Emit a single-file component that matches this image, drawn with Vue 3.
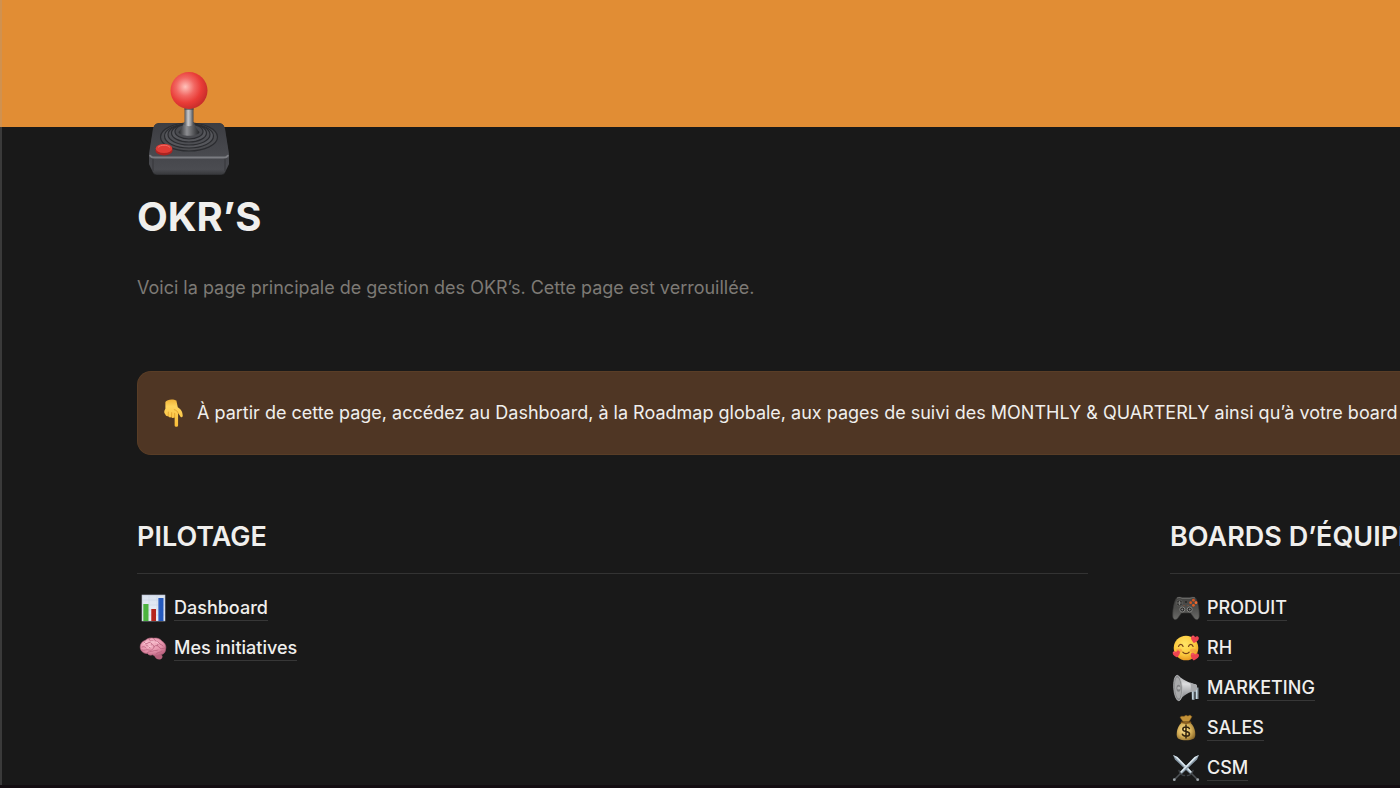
<script setup>
const columns = [
  {
    title: 'PILOTAGE',
    links: [
      { icon: 'chart', label: 'Dashboard' },
      { icon: 'brain', label: 'Mes initiatives' },
    ],
  },
  {
    title: 'BOARDS D’ÉQUIPE',
    links: [
      { icon: 'gamepad', label: 'PRODUIT' },
      { icon: 'face', label: 'RH' },
      { icon: 'megaphone', label: 'MARKETING' },
      { icon: 'moneybag', label: 'SALES' },
      { icon: 'swords', label: 'CSM' },
    ],
  },
]
</script>

<template>
  <div class="page">
    <svg class="sprite" aria-hidden="true">
      <defs>
        <radialGradient id="ball" cx=".4" cy=".4" r=".62">
          <stop offset="0" stop-color="#ffc2bb" />
          <stop offset=".4" stop-color="#f26762" />
          <stop offset=".7" stop-color="#e93c37" />
          <stop offset="1" stop-color="#c92d2a" />
        </radialGradient>
        <linearGradient id="stick" x1="0" x2="1" y1="0" y2="0">
          <stop offset="0" stop-color="#55565a" />
          <stop offset=".4" stop-color="#c8c9cb" />
          <stop offset=".65" stop-color="#a0a1a4" />
          <stop offset="1" stop-color="#48494d" />
        </linearGradient>
        <linearGradient id="boot" x1="0" x2="1" y1="0" y2="0">
          <stop offset="0" stop-color="#252629" />
          <stop offset=".4" stop-color="#8d8e92" />
          <stop offset="1" stop-color="#242528" />
        </linearGradient>
        <linearGradient id="baseTop" x1="0" x2="0" y1="0" y2="1">
          <stop offset="0" stop-color="#3c3d42" />
          <stop offset="1" stop-color="#4a4b50" />
        </linearGradient>
        <linearGradient id="baseFront" x1="0" x2="0" y1="0" y2="1">
          <stop offset="0" stop-color="#696a6f" />
          <stop offset=".2" stop-color="#46474c" />
          <stop offset=".75" stop-color="#4b4c51" />
          <stop offset="1" stop-color="#37383b" />
        </linearGradient>
        <linearGradient id="hand" x1="0" x2="0" y1="0" y2="1">
          <stop offset="0" stop-color="#efb136" />
          <stop offset=".25" stop-color="#ffd45c" />
          <stop offset="1" stop-color="#f9bd38" />
        </linearGradient>
        <linearGradient id="paper" x1="0" x2="0" y1="0" y2="1">
          <stop offset="0" stop-color="#d9e2ef" />
          <stop offset="1" stop-color="#f3f5f9" />
        </linearGradient>
        <radialGradient id="pink" cx=".4" cy=".3" r=".75">
          <stop offset="0" stop-color="#f8bccb" />
          <stop offset=".6" stop-color="#e694ac" />
          <stop offset="1" stop-color="#b95f7d" />
        </radialGradient>
        <linearGradient id="pad" x1="0" x2="0" y1="0" y2="1">
          <stop offset="0" stop-color="#434342" />
          <stop offset=".5" stop-color="#4e4e4c" />
          <stop offset="1" stop-color="#6b6b68" />
        </linearGradient>
        <radialGradient id="skin" cx=".45" cy=".35" r=".65">
          <stop offset="0" stop-color="#ffe566" />
          <stop offset=".65" stop-color="#fcca3e" />
          <stop offset="1" stop-color="#e99a22" />
        </radialGradient>
        <linearGradient id="horn" x1="0" x2="0" y1="0" y2="1">
          <stop offset="0" stop-color="#a4a5a7" />
          <stop offset=".35" stop-color="#dcdddf" />
          <stop offset="1" stop-color="#77787b" />
        </linearGradient>
        <radialGradient id="gold" cx=".42" cy=".45" r=".65">
          <stop offset="0" stop-color="#ffe596" />
          <stop offset=".55" stop-color="#d6b058" />
          <stop offset="1" stop-color="#8b6829" />
        </radialGradient>
      </defs>

      <symbol id="icon-chart" viewBox="0 0 28 28">
        <rect x="3" y="1" width="23" height="26" fill="url(#paper)" stroke="#b8c0cf" stroke-width=".6" />
        <path d="M3 6h23M3 11h23M3 16h23M3 21h23M10 1v26M18 1v26" stroke="#c7d1e2" stroke-width=".5" />
        <rect x="4" y="10" width="5.5" height="17" fill="#4cb340" />
        <rect x="12" y="15" width="5" height="12" fill="#b5261d" />
        <rect x="19.2" y="4" width="5.3" height="23" fill="#2459bd" />
        <path d="M4.500 10v17M12.500 15v12M19.700 4v23" stroke="#fff" stroke-opacity=".25" />
      </symbol>

      <symbol id="icon-brain" viewBox="0 0 28 28">
        <path d="M15 21c1 3 3 4.500 5.500 4.500 2 0 3-1.500 3-3.500l-3-3z" fill="#b8627d" />
        <path d="M1.500 15C.5 11 2.500 7.500 6 6.500 8.500 4 12 3.500 14.500 4.200c4-.7 7 .8 8.500 3 3 1.500 4.500 5 3.600 8-.1 3.500-2.600 5.600-5.600 5.400-2.500 1.800-5.500 1.500-7.500.2-2 .8-4 .2-5-1.300-3 .3-6-1.500-7-4.500z" fill="url(#pink)" stroke="#b86781" stroke-width=".6" />
        <path d="M3 13c2-1 3 0 4 1M5 8c1 2 3 2 4 1s3-1 4 1M10 5c0 2 2 2 4 2M15 5c1 3 4 2 5 4s3 1 4 3M3 16c3 1 4-1 7 0s4-1 5-3 4-2 5 0 3 2 6 1M8 19c1-2 4-1 6-2s4 0 5-1M12 11c2-1 3 0 3 2M18 12c0-2 2-3 3-2M17 20c1-2 4-1 6-3M7 11c1 1 3 1 4 3" fill="none" stroke="#b35b78" stroke-width=".7" stroke-linecap="round" />
        <path d="M5 10c1-2 2-1 3-2M12 8c1-1 2 0 3 0M17 8c2 0 2 1 3 2M9 13c2 0 2-1 3-1" fill="none" stroke="#ffd6df" stroke-width=".8" stroke-linecap="round" />
      </symbol>

      <symbol id="icon-gamepad" viewBox="0 0 28 28">
        <path d="M4 4.500C6 2.500 9 3 10 3.500h8c1-.5 4-1 6 1 2 4 3.500 11 3.300 17.500-.2 4-3 4.500-4.800 2.500l-4-5.500h-9l-4 5.500C3.700 26.500.9 26 .7 22 .5 15.500 2 8.500 4 4.500z" fill="url(#pad)" stroke="#353534" stroke-width=".6" />
        <path d="M5 4c3-1 4 0 5 .3h8c2-.4 3-1.200 5-.3" fill="none" stroke="#858582" stroke-width=".7" />
        <circle cx="7.500" cy="9" r="3.200" fill="#30302f" stroke="#6b6b68" stroke-width=".6" />
        <path d="M7.500 6.800v4.400M5.300 9h4.400" stroke="#7b7b78" stroke-width="1.200" />
        <circle cx="18.700" cy="8.700" r="1.400" fill="#d6551f" />
        <circle cx="21.400" cy="6.200" r="1.400" fill="#d6551f" />
        <circle cx="24" cy="8.700" r="1.400" fill="#f4692c" />
        <circle cx="21.400" cy="11.300" r="1.400" fill="#e35b20" />
        <circle cx="14" cy="8" r="1" fill="#242423" />
        <circle cx="12" cy="11.500" r=".5" fill="#a7562d" />
        <circle cx="16" cy="11.500" r=".5" fill="#a7562d" />
        <circle cx="10.300" cy="15.500" r="2.500" fill="#242424" stroke="#868683" />
        <circle cx="10.300" cy="15.500" r="1" fill="#858583" />
        <circle cx="17.700" cy="15.500" r="2.500" fill="#242424" stroke="#868683" />
        <circle cx="17.700" cy="15.500" r="1" fill="#858583" />
      </symbol>

      <symbol id="heart" viewBox="0 0 10 10">
        <path d="M5 9.500C1 6.500 0 4.500.5 2.600 1.200.6 4 .5 5 2.800 6 .5 8.800.6 9.500 2.600 10 4.500 9 6.500 5 9.500z" fill="#ed4350" />
        <path d="M1.700 3.300c.2-1 1-1.200 1.600-.8" fill="none" stroke="#ff8990" stroke-width=".7" />
      </symbol>

      <symbol id="icon-face" viewBox="0 0 28 28">
        <circle cx="14" cy="14" r="12.300" fill="url(#skin)" />
        <ellipse cx="7" cy="16.500" rx="3" ry="2" fill="#f58a42" opacity=".5" />
        <ellipse cx="21" cy="16.500" rx="3" ry="2" fill="#f58a42" opacity=".5" />
        <path d="M6.500 12.500c.8-2.800 3.800-2.800 4.600 0M16.500 12.500c.8-2.800 3.800-2.800 4.600 0M10.800 18.200c1.500 2 4.900 2 6.400 0" fill="none" stroke="#79431a" stroke-width="1.200" stroke-linecap="round" />
        <use href="#heart" x="18.500" y="1" width="8.500" height="8.500" transform="rotate(12 23 5)" />
        <use href="#heart" x=".5" y="16" width="8" height="8" transform="rotate(-10 4 20)" />
        <use href="#heart" x="18" y="18" width="9" height="9" transform="rotate(12 22 23)" />
      </symbol>

      <symbol id="icon-megaphone" viewBox="0 0 28 28">
        <path d="M19.500 14l7-.5v11.500h-3v-7h-1v8h-2.600z" fill="#8d99a2" />
        <path d="M24.500 14v11M20.700 17v8" stroke="#c7d9e3" stroke-width="1.200" />
        <path d="M5.500 1.200C10 5 17 9 24 10.500c1.500 1 1.500 5 0 6C17 18 12 21 7.500 26.500z" fill="url(#horn)" />
        <path d="M18 8.500c1.200 2.500 1.200 6.500 0 9.500l6-1.500c1.500-1 1.500-5 0-6z" fill="#a8a9ac" />
        <ellipse cx="6" cy="14" rx="4.300" ry="12.800" transform="rotate(-4 6 14)" fill="#8a8b8d" stroke="#c1c2c3" stroke-width=".7" />
        <ellipse cx="6" cy="14" rx="3" ry="10.500" transform="rotate(-4 6 14)" fill="#a9aaab" />
        <ellipse cx="6.500" cy="14.300" rx="2" ry="3.500" fill="#808183" />
        <circle cx="6.800" cy="14" r="1.600" fill="#b5b6b7" />
      </symbol>

      <symbol id="icon-moneybag" viewBox="0 0 28 28">
        <path d="M8 3.200c2-2.200 3.500 0 5-1.500 1.500-1.300 2 .8 3.500 0 1.500-1 2.500-.3 3.500 1l-3 5h-6z" fill="#c39238" stroke="#765119" stroke-width=".5" />
        <path d="M10.500 8h7c4 3 6 8 5.800 13-.2 4-3 5.200-9.300 5.200s-9.100-1.200-9.300-5.200C4.500 16 6.500 11 10.500 8z" fill="url(#gold)" />
        <path d="M9.500 8.300c3 1 6 1 9 0" stroke="#83571b" stroke-width="1.700" fill="none" stroke-linecap="round" />
        <path d="M17.400 14.500c-.7-1.800-6.600-2.200-6.600.7 0 3.200 6.700 1.600 6.700 4.800 0 2.800-6.200 2.900-7.100.3M14 11V24" stroke="#33240f" stroke-width="1.500" fill="none" stroke-linecap="round" />
      </symbol>

      <symbol id="blade" viewBox="0 0 28 28">
        <path d="M1 1l4.500 2L20.500 18.500l-2 1.700L3 5.500z" fill="#8798a6" />
        <path d="M1 1l18.500 18.500 1-1L5.500 3z" fill="#dce7ee" />
        <path d="M15.500 21.500c2 .5 5-2 5.500-5" stroke="#3d4145" stroke-width="1.500" fill="none" stroke-linecap="round" />
        <path d="M19.500 19.500l5.500 5.500" stroke="#4c5054" stroke-width="1.600" />
        <circle cx="25.700" cy="25.700" r="1.400" fill="#9da5aa" />
      </symbol>

      <symbol id="icon-swords" viewBox="0 0 28 28">
        <use href="#blade" width="28" height="28" />
        <use href="#blade" width="28" height="28" transform="translate(28 0) scale(-1 1)" />
      </symbol>
    </svg>

    <header class="cover"></header>

    <main class="content">
      <svg class="joystick" viewBox="0 0 82 106" role="img" aria-label="Joystick">
        <path d="M12 52h58c4 0 6 2 7 6l4 26v9l-4 9c-1 2-3 2-6 2H11c-3 0-5 0-6-2l-4-9v-9l4-26c1-4 3-6 7-6z" fill="#2a2b2e" />
        <path d="M12 52h58c4 0 6 2 7 6l4 25c0 3-2 5-5 5H6c-3 0-5-2-5-5l4-25c1-4 3-6 7-6z" fill="url(#baseTop)" />
        <path d="M1 83c0 2 2 3 5 3h70c3 0 5-1 5-3v10l-4 8c-1 2-3 2.500-6 2.500H11c-3 0-5-.5-6-2.500l-4-8z" fill="url(#baseFront)" />
        <path d="M2 84c1 2.500 2 2.500 5 2.500h68c3 0 4 0 5-2.500" fill="none" stroke="#7b7c81" stroke-width="2" />
        <path d="M5 88v12M77 88v12" stroke="#36373b" />
        <g stroke="#2b2c30" stroke-width="1.200">
          <ellipse cx="41" cy="66" rx="28.500" ry="14" fill="#4b4c50" />
          <ellipse cx="41" cy="65" rx="24.500" ry="12" fill="#56575c" />
          <ellipse cx="41" cy="63.500" rx="21" ry="10.500" fill="#4e4f54" />
          <ellipse cx="41" cy="62" rx="17.500" ry="9" fill="#56575c" />
          <ellipse cx="41" cy="60.500" rx="14" ry="7.500" fill="#4a4b50" />
        </g>
        <path d="M36 51h10c1 5 3 7 5.500 10-1 5-20 5-21 0 2.500-3 4.500-5 5.500-10z" fill="url(#boot)" />
        <path d="M36.500 34h9v20c-2 1.500-7 1.500-9 0z" fill="url(#stick)" />
        <path d="M36.500 38h9" stroke="#444" stroke-opacity=".6" stroke-width="2" />
        <circle cx="41" cy="19.500" r="18.500" fill="url(#ball)" />
        <ellipse cx="16" cy="79.500" rx="8.500" ry="5" fill="#aa2421" />
        <ellipse cx="16" cy="77.500" rx="8.300" ry="4.500" fill="#df3b35" />
        <path d="M10 76.500c2-3 10-3 12 0" fill="none" stroke="#f16d64" />
      </svg>

      <h1>OKR’S</h1>
      <p class="intro">Voici la page principale de gestion des OKR’s. Cette page est verrouillée.</p>

      <aside class="callout">
        <svg class="hand" viewBox="0 0 22 30" aria-hidden="true">
          <path d="M2.500 3C4 0 11-.5 14 1.500l1.500 7c3 2 5 4 5.200 9-.7 2-2.300 1.800-2.700.5l-2.200-3.500v13c-.2 2-3.300 2-3.600 0v-8.500c-1.500 1.300-3 .7-3.400-.3-1.300.8-3 .2-3.400-1-1.700.3-3-.7-3.100-2.200-1.300-.8-1.500-3 .2-5.500z" fill="url(#hand)" />
          <path d="M5.400 17.500l.2-4M8.900 18.600l.2-4.500M12.200 18.800v-4M15.800 14.500c-.5-2-2-3-4-3.500" stroke="#d89324" stroke-width=".7" fill="none" stroke-linecap="round" />
        </svg>
        <p>À partir de cette page, accédez au Dashboard, à la Roadmap globale, aux pages de suivi des MONTHLY &amp; QUARTERLY ainsi qu’à votre board</p>
      </aside>

      <div class="columns">
        <section v-for="column in columns" :key="column.title" class="column">
          <h2>{{ column.title }}</h2>
          <ul>
            <li v-for="link in column.links" :key="link.label">
              <svg class="icon" aria-hidden="true"><use :href="'#icon-' + link.icon" /></svg>
              <a href="#">{{ link.label }}</a>
            </li>
          </ul>
        </section>
      </div>
    </main>
  </div>
</template>

<style>
body {
  margin: 0;
  background: #191919;
}
</style>

<style scoped>
.page {
  position: relative;
  box-sizing: border-box;
  height: 100vh;
  overflow: hidden;
  border-bottom: 3px solid #130d11;
  background: #191919;
  color: #f0efed;
  font-family: Inter, "Liberation Sans", sans-serif;
  font-size: 18px;
  line-height: 28px;
}
.page::before {
  content: "";
  position: absolute;
  inset: 0 auto 0 0;
  width: 2px;
  background: rgba(160, 160, 160, 0.25);
}
.sprite {
  position: absolute;
  width: 0;
  height: 0;
}
.cover {
  height: 127px;
  background: #e18d34;
}
.content {
  padding-left: 137px;
}
.joystick {
  position: relative;
  display: block;
  width: 82px;
  height: 106px;
  margin: -56px 0 0 11px;
}
h1 {
  margin: 16px 0 0;
  font-size: 40px;
  font-weight: 700;
  line-height: 48px;
}
.intro {
  margin: 33px 0 0;
  color: #7d7a75;
}
.callout {
  display: flex;
  align-items: center;
  gap: 13px;
  box-sizing: border-box;
  height: 84px;
  margin-top: 69px;
  padding-left: 25px;
  border: 1px solid #593d26;
  border-right: 0;
  border-radius: 14px 0 0 14px;
  background: #4f3624;
  white-space: nowrap;
}
.callout p {
  margin: 0;
}
.hand {
  flex: none;
  width: 21px;
  height: 29px;
}
.columns {
  display: flex;
  gap: 82px;
  margin-top: 62px;
}
.column {
  flex: 0 0 75.3%;
}
h2 {
  margin: 0;
  padding-bottom: 16px;
  border-bottom: 1px solid #333;
  font-size: 27px;
  font-weight: 600;
  line-height: 40px;
}
ul {
  margin: 14px 0 0;
  padding: 0;
  list-style: none;
}
li {
  display: flex;
  align-items: center;
  gap: 7px;
  height: 40px;
  padding-left: 2px;
}
.icon {
  width: 28px;
  height: 28px;
}
a {
  border-bottom: 1px solid #373737;
  color: inherit;
  font-weight: 500;
  line-height: 24px;
  text-decoration: none;
}
</style>
